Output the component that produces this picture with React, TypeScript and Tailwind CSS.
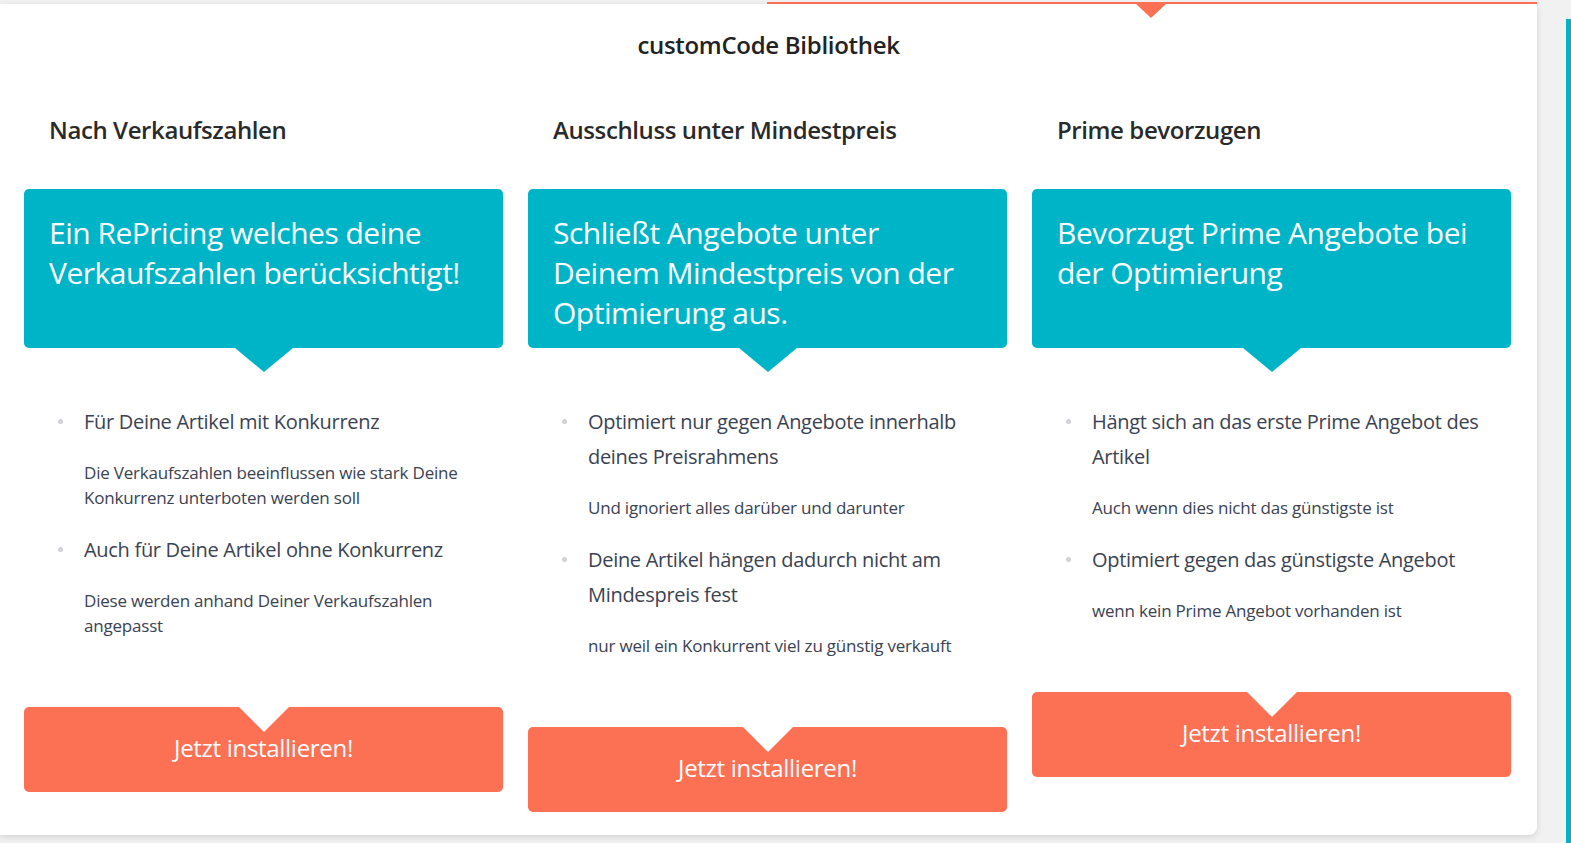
import React from "react";

type Item = { main: string; sub: string[] };
type Col = { title: string; hero: string[]; items: Item[] };

const cols: Col[] = [
  {
    title: "Nach Verkaufszahlen",
    hero: ["Ein RePricing welches deine", "Verkaufszahlen berücksichtigt!"],
    items: [
      {
        main: "Für Deine Artikel mit Konkurrenz",
        sub: ["Die Verkaufszahlen beeinflussen wie stark Deine Konkurrenz unterboten werden soll"],
      },
      {
        main: "Auch für Deine Artikel ohne Konkurrenz",
        sub: ["Diese werden anhand Deiner Verkaufszahlen angepasst"],
      },
    ],
  },
  {
    title: "Ausschluss unter Mindestpreis",
    hero: ["Schließt Angebote unter", "Deinem Mindestpreis von der", "Optimierung aus."],
    items: [
      {
        main: "Optimiert nur gegen Angebote innerhalb deines Preisrahmens",
        sub: ["Und ignoriert alles darüber und darunter"],
      },
      {
        main: "Deine Artikel hängen dadurch nicht am Mindespreis fest",
        sub: ["nur weil ein Konkurrent viel zu günstig verkauft"],
      },
    ],
  },
  {
    title: "Prime bevorzugen",
    hero: ["Bevorzugt Prime Angebote bei", "der Optimierung"],
    items: [
      {
        main: "Hängt sich an das erste Prime Angebot des Artikel",
        sub: ["Auch wenn dies nicht das günstigste ist"],
      },
      {
        main: "Optimiert gegen das günstigste Angebot",
        sub: ["wenn kein Prime Angebot vorhanden ist"],
      },
    ],
  },
];

function Column({ col }: { col: Col }) {
  return (
    <div className="flex flex-col">
      <h2 className="pl-[25px] text-[24px] leading-[32px] font-semibold tracking-[-0.4px] text-[#2a2a2a]">
        {col.title}
      </h2>
      <div className="mt-[43px] h-[159px] rounded-[5px] bg-[#00b4c8] pl-[25px] pr-[10px] pt-[24px] text-[30px] leading-[40px] tracking-[-0.5px] text-white">
        {col.hero.map((l, i) => (
          <div key={i} className="whitespace-nowrap">
            {l}
          </div>
        ))}
      </div>
      <div className="mx-auto h-0 w-0 border-x-[29px] border-t-[24px] border-x-transparent border-t-[#00b4c8]" />
      <ul className="mt-[32px] flex flex-col gap-[22px] pr-[15px]">
        {col.items.map((it, i) => (
          <li key={i} className="flex">
            <span className="flex w-[60px] shrink-0 justify-end pr-[21px] pt-[15px]">
              <span className="block h-[5px] w-[5px] rounded-full bg-[#cfd2d6]" />
            </span>
            <div className="flex flex-col gap-[21px]">
              <div className="text-[20px] leading-[35px] tracking-[-0.3px] text-[#3b4252]">{it.main}</div>
              {it.sub.map((s, j) => (
                <div key={j} className="text-[17px] leading-[25px] tracking-[-0.2px] text-[#3b4252]">
                  {s}
                </div>
              ))}
            </div>
          </li>
        ))}
      </ul>
      <div className="relative mt-[69px] flex h-[85px] items-start justify-center rounded-[5px] bg-[#fc7054] pt-[25px]">
        <span className="absolute left-1/2 top-0 h-0 w-0 -translate-x-1/2 border-x-[25px] border-t-[25px] border-x-transparent border-t-white" />
        <span className="text-[24px] leading-[32px] font-normal tracking-[-0.3px] text-white">Jetzt installieren!</span>
      </div>
    </div>
  );
}

export default function App() {
  return (
    <div
      className="relative flex h-[843px] w-full overflow-hidden bg-[#f1f1f1]"
      style={{ fontFamily: '"Open Sans", "Noto Sans", sans-serif' }}
    >
      <div className="mt-[4px] h-[831px] w-[1537px] shrink-0 rounded-br-[8px] bg-white shadow-[0_2px_6px_rgba(0,0,0,0.12)]">
        <h1 className="pt-[25px] text-center text-[24px] leading-[32px] font-semibold tracking-[-0.3px] text-[#222]">
          customCode Bibliothek
        </h1>
        <div className="mt-[53px] grid grid-cols-3 gap-[25px] pl-[24px] pr-[26px]">
          {cols.map((c, i) => (
            <Column key={i} col={c} />
          ))}
        </div>
      </div>
      <div className="ml-[29px] mt-[19px] w-[5px] shrink-0 bg-[#00b4c8]" />
      <div className="absolute left-[767px] top-[2px] h-[2px] w-[770px] bg-[#fc7054]" />
      <div className="absolute left-[1135px] top-[3px] h-0 w-0 border-x-[16px] border-t-[15px] border-x-transparent border-t-[#fc7054]" />
    </div>
  );
}
